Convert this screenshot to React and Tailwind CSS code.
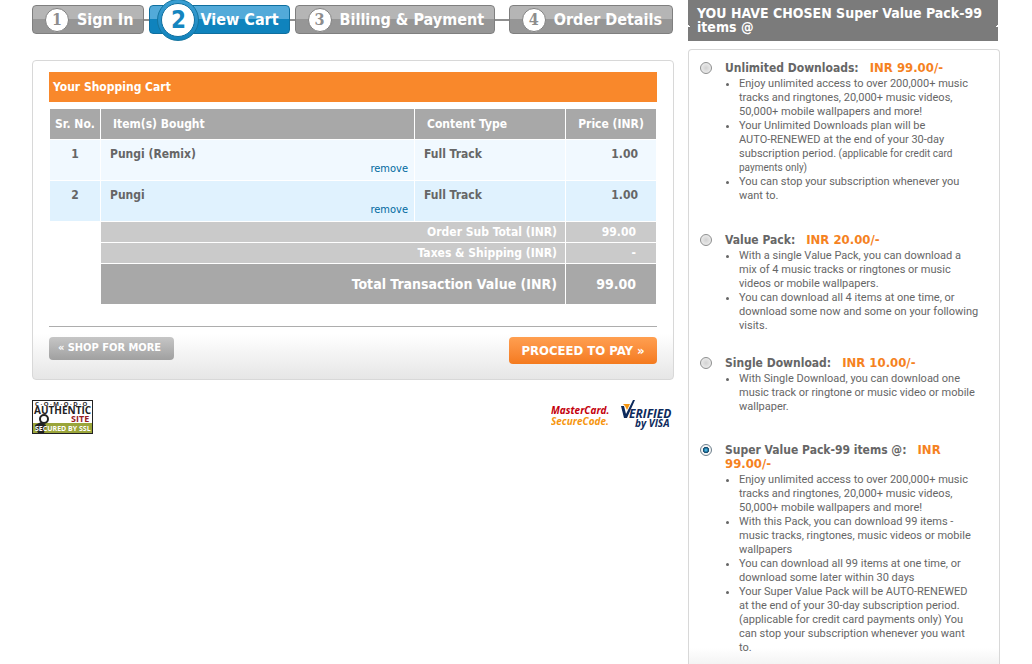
import React, { useState } from 'react'
import clsx from 'clsx'

const STEPS = [
  { number: 1, label: 'Sign In', grow: false },
  { number: 2, label: 'View Cart', grow: false },
  { number: 3, label: 'Billing & Payment', grow: true },
  { number: 4, label: 'Order Details', grow: false },
]

const ITEMS = [
  { id: 1, title: 'Pungi (Remix)', type: 'Full Track', price: '1.00' },
  { id: 2, title: 'Pungi', type: 'Full Track', price: '1.00' },
]

const PLANS = [
  {
    id: 'unlimited',
    name: 'Unlimited Downloads:',
    price: 'INR 99.00/-',
    className: 'mb-[30px]',
    points: [
      { text: 'Enjoy unlimited access to over 200,000+ music tracks and ringtones, 20,000+ music videos, 50,000+ mobile wallpapers and more!' },
      {
        text: 'Your Unlimited Downloads plan will be AUTO\u2011RENEWED at the end of your 30-day subscription period.',
        note: '(applicable for credit card payments only)',
      },
      { text: 'You can stop your subscription whenever you want to.' },
    ],
  },
  {
    id: 'value',
    name: 'Value Pack:',
    price: 'INR 20.00/-',
    className: 'mb-[23px]',
    points: [
      { text: 'With a single Value Pack, you can download a mix\u00a0of 4 music tracks or ringtones or music videos or mobile wallpapers.' },
      { text: 'You can download all 4 items at one time, or download some now and some on your following visits.' },
    ],
  },
  {
    id: 'single',
    name: 'Single Download:',
    price: 'INR 10.00/-',
    className: 'mb-[29px]',
    points: [
      { text: 'With Single Download, you can download one music track or ringtone or music video or mobile wallpaper.' },
    ],
  },
  {
    id: 'super',
    name: 'Super Value Pack-99 items @:',
    price: 'INR 99.00/-',
    className: '',
    points: [
      { text: 'Enjoy unlimited access to over 200,000+ music tracks and ringtones, 20,000+ music videos, 50,000+ mobile wallpapers and more!' },
      { text: 'With this Pack, you can download 99 items - music tracks, ringtones, music videos or mobile wallpapers' },
      { text: 'You can download all 99 items at one time, or download some later within 30 days' },
      { text: 'Your Super Value Pack will be AUTO-RENEWED at the end of your 30-day subscription period. (applicable for credit card payments only) You can stop your subscription whenever you want to.' },
    ],
  },
]

function Step({ number, label, active }) {
  return (
    <li
      className={clsx(
        'flex h-[29px] shrink-0 items-center rounded border pr-[10px] text-base font-bold text-white',
        active
          ? 'border-[#0f6f9f] bg-linear-to-b from-[#52aad9] from-50% to-[#0f83bd] to-50% pl-[7px]'
          : 'border-[#7f7f7f] bg-linear-to-b from-[#b5b5b5] from-50% to-[#969696] to-50% pl-3'
      )}
    >
      {active ? (
        <span className="-my-2 mr-px flex size-[42px] items-center justify-center rounded-full border border-[#14759f] bg-linear-to-b from-[#3a9fd3] to-[#0f83bd]">
          <span className="flex size-[34px] items-center justify-center rounded-full border border-[#0f6f9f] bg-white text-2xl text-[#1485bf]">
            {number}
          </span>
        </span>
      ) : (
        <span className="mr-2 flex size-6 items-center justify-center rounded-full border border-[#808080] bg-white font-['DejaVu_Serif_Condensed','DejaVu_Serif',serif] text-base text-[#8d8d8d]">
          {number}
        </span>
      )}
      {label}
    </li>
  )
}

function Steps() {
  return (
    <ol className="flex h-[39px] items-center pr-px">
      {STEPS.map((step, i) => (
        <React.Fragment key={step.number}>
          <Step number={step.number} label={step.label} active={step.number === 2} />
          {i < STEPS.length - 1 && (
            <li
              aria-hidden="true"
              className={clsx('h-[2px] bg-[#8f8f8f]', step.grow ? 'flex-1' : 'w-[5px]')}
            />
          )}
        </React.Fragment>
      ))}
    </ol>
  )
}

function CartTable({ items, onRemove }) {
  return (
    <table className="mt-[6px] w-full table-fixed border-separate border-spacing-px text-xs font-bold text-[#666]">
      <colgroup>
        <col className="w-[50px]" />
        <col />
        <col className="w-[150px]" />
        <col className="w-[90px]" />
      </colgroup>
      <thead>
        <tr className="h-[30px] text-left text-white">
          <th className="bg-[#a8a8a8] text-center whitespace-nowrap">Sr. No.</th>
          <th className="bg-[#a8a8a8] px-3">Item(s) Bought</th>
          <th className="bg-[#a8a8a8] px-3">Content Type</th>
          <th className="bg-[#a8a8a8] text-center whitespace-nowrap">Price (INR)</th>
        </tr>
      </thead>
      <tbody>
        {items.map((item, i) => (
          <tr key={item.id} className={clsx('h-10 align-top', i % 2 ? '[&>td]:bg-[#e0f2fe]' : '[&>td]:bg-[#f1f9ff]')}>
            <td className="pt-[6px] text-center">{i + 1}</td>
            <td className="pt-[6px] pr-[6px] pl-[9px]">
              {item.title}
              <div className="text-right text-[11px] leading-[14px] font-normal">
                <a
                  href="#remove"
                  className="text-[#0069a0]"
                  onClick={(e) => {
                    e.preventDefault()
                    onRemove(item.id)
                  }}
                >
                  remove
                </a>
              </div>
            </td>
            <td className="pt-[6px] pl-[9px]">{item.type}</td>
            <td className="pt-[6px] pr-[18px] text-right">{item.price}</td>
          </tr>
        ))}
      </tbody>
      <tfoot className="text-right text-white">
        <tr className="h-5">
          <td />
          <td colSpan={2} className="bg-[#cacaca] pr-2">Order Sub Total (INR)</td>
          <td className="bg-[#cacaca] pr-5">99.00</td>
        </tr>
        <tr className="h-5">
          <td />
          <td colSpan={2} className="bg-[#cacaca] pr-2">Taxes &amp; Shipping (INR)</td>
          <td className="bg-[#cacaca] pr-5">-</td>
        </tr>
        <tr className="h-10 text-sm">
          <td />
          <td colSpan={2} className="bg-[#a8a8a8] pr-2">Total Transaction Value (INR)</td>
          <td className="bg-[#a8a8a8] pr-5">99.00</td>
        </tr>
      </tfoot>
    </table>
  )
}

function ComodoSeal() {
  return (
    <svg width="61" height="34" viewBox="0 0 61 34" role="img" aria-label="Comodo authentic site" fontFamily="'Open Sans', sans-serif" fontWeight="bold">
      <rect x="0.5" y="0.5" width="60" height="33" fill="#fff" stroke="#222" />
      <text x="3" y="6" fontSize="6" fill="#222">C · O · M · O · D · O</text>
      <text x="2" y="14" fontSize="10" fill="#222">AUTHENTIC</text>
      <text x="39" y="22" fontSize="9" fill="#991b1e">SITE</text>
      <rect x="1" y="23" width="59" height="10" fill="#9aa53a" />
      <ellipse cx="12" cy="19" rx="4" ry="4" fill="none" stroke="#222" strokeWidth="2" />
      <path d="M3 25l6-3 5 3-2 8H6l-2-4z" fill="#222" />
      <text x="3" y="31" fontSize="7" fill="#fff">SECURED BY SSL</text>
    </svg>
  )
}

function MasterCardLogo() {
  return (
    <svg width="62" height="30" viewBox="0 0 62 30" role="img" aria-label="MasterCard SecureCode" fontFamily="'Open Sans', sans-serif" fontWeight="bold" fontStyle="italic">
      <text x="0" y="14" fontSize="10" fill="#c4000c">MasterCard.</text>
      <text x="0" y="25" fontSize="10" fill="#f6960f">SecureCode.</text>
    </svg>
  )
}

function VisaLogo() {
  return (
    <svg width="52" height="32" viewBox="0 0 52 32" role="img" aria-label="Verified by Visa" fontFamily="'Open Sans', sans-serif" fontWeight="bold" fontStyle="italic">
      <path d="M0 6h3l2 8L12 0h2L6 18H3z" fill="#0d2a5c" />
      <path d="M2 4h7l-3 6-2-4z" fill="#f6960f" />
      <text x="8" y="18" fontSize="12" fill="#0d2a5c">ERIFIED</text>
      <text x="14" y="27" fontSize="10" fill="#0d2a5c">by VISA</text>
    </svg>
  )
}

function Plan({ plan, checked, onChange }) {
  return (
    <div className={clsx('flex items-start', plan.className)}>
      <input
        id={plan.id}
        type="radio"
        name="plan"
        checked={checked}
        onChange={() => onChange(plan.id)}
        className="mt-px mr-[13px] size-3 shrink-0 appearance-none rounded-full border border-[#8e8f8f] bg-radial from-[#d2d2d2] to-[#f4f4f4] checked:border-[#6d7f8c] checked:from-[#4fc3f0] checked:from-5% checked:via-[#0b4468] checked:via-40% checked:to-[#f4f4f4] checked:to-50%"
      />
      <div className="flex-1">
        <label htmlFor={plan.id} className="block pb-[2px] text-xs leading-[14px] font-bold text-[#666]">
          {plan.name}
          <span className="ml-[11px] text-[13px] leading-[14px] text-[#f5821f]">{plan.price}</span>
        </label>
        <ul className="list-disc pl-[14px] font-['Roboto','Noto_Sans',sans-serif] text-[11px] leading-[14px] text-[#666]">
          {plan.points.map((point) => (
            <li key={point.text}>
              {point.text}
              {point.note && <span className="text-[10px]"> {point.note}</span>}
            </li>
          ))}
        </ul>
      </div>
    </div>
  )
}

export default function App() {
  const [items, setItems] = useState(ITEMS)
  const [plan, setPlan] = useState('super')

  const handleRemove = (id) => {
    setItems(items.filter((item) => item.id !== id))
  }

  return (
    <div className="flex min-h-screen gap-[14px] bg-white px-8 font-['DejaVu_Sans_Condensed','Noto_Sans',sans-serif]">
      <main className="min-w-0 flex-1">
        <Steps />

        <section className="mt-[21px] rounded-sm border border-[#d8d8d8] bg-[linear-gradient(to_top,#e6e6e6,#fff_45px)] px-4 pt-[11px] pb-[15px]">
          <h1 className="flex h-[30px] items-center bg-[#f9882b] px-1 text-xs font-bold text-white">
            Your Shopping Cart
          </h1>
          <CartTable items={items} onRemove={handleRemove} />
          <div className="mt-[21px] flex items-start justify-between border-t border-[#adadad] pt-[10px]">
            <button
              type="button"
              className="h-[23px] w-[125px] rounded bg-linear-to-b from-[#c6c6c6] to-[#a0a0a0] pr-1 text-[11px] font-bold text-white"
            >
              « SHOP FOR MORE
            </button>
            <button
              type="button"
              className="h-[27px] w-[148px] rounded bg-linear-to-b from-[#ff9f50] to-[#f47a1d] text-[13px] font-bold text-white"
            >
              PROCEED TO PAY »
            </button>
          </div>
        </section>

        <div className="mt-5 flex items-start justify-between pr-px">
          <ComodoSeal />
          <div className="flex items-start gap-2">
            <MasterCardLogo />
            <VisaLogo />
          </div>
        </div>
      </main>

      <aside className="flex w-[312px] shrink-0 flex-col">
        <h2 className="relative mr-[2px] bg-[#7b7b7b] px-[9px] pt-[6px] pb-[7px] text-sm leading-[14px] font-bold text-white">
          YOU HAVE CHOSEN Super Value Pack-99 items @
          <span className="absolute top-[23px] left-0 size-1 bg-[radial-gradient(circle_at_top_right,#7b7b7b_4px,#fff_4px)]" />
          <span className="absolute top-[23px] right-0 size-1 bg-[radial-gradient(circle_at_top_left,#7b7b7b_4px,#fff_4px)]" />
        </h2>
        <form className="mt-2 flex-1 rounded-t-sm border border-b-0 border-[#d8d8d8] bg-[linear-gradient(to_top,#f4f4f4,#fff_16px)] pt-[11px] pr-5 pb-[9px] pl-[11px]">
          {PLANS.map((p) => (
            <Plan key={p.id} plan={p} checked={plan === p.id} onChange={setPlan} />
          ))}
        </form>
      </aside>
    </div>
  )
}
